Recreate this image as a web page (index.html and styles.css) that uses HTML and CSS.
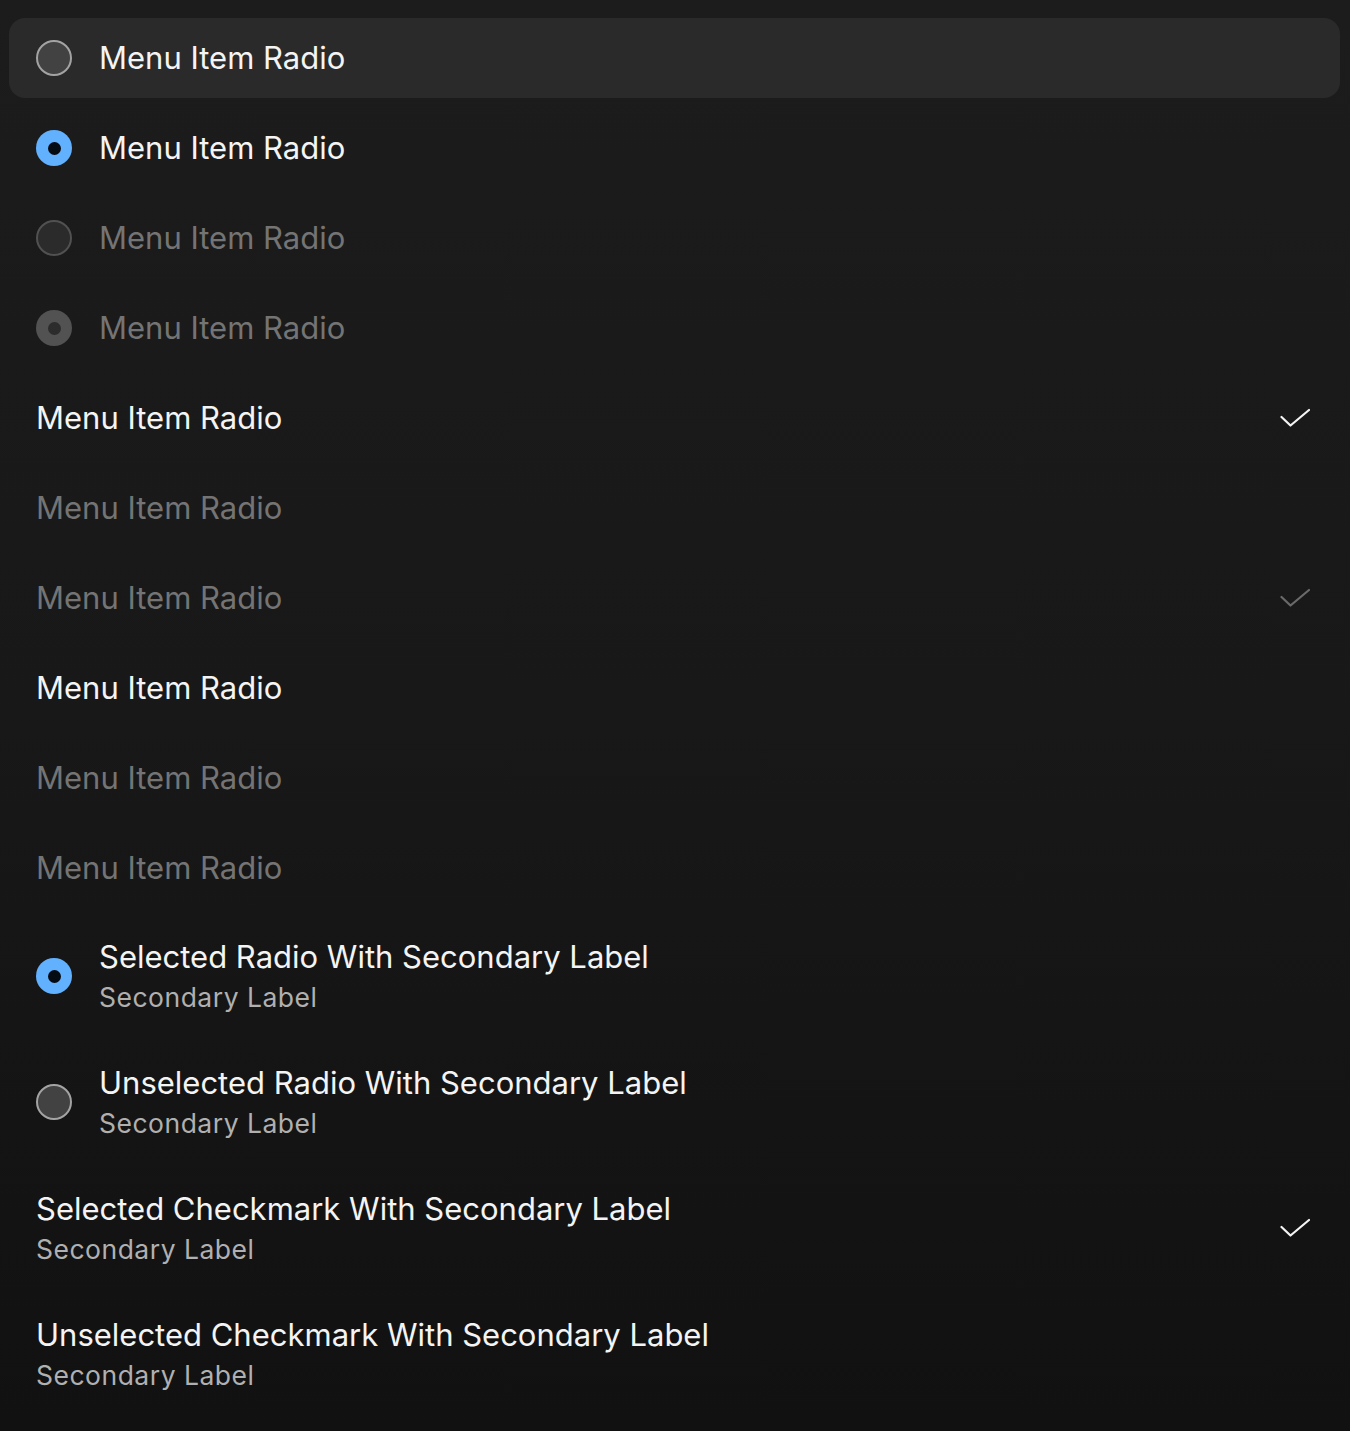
FILE: index.html
```html
<!DOCTYPE html>
<html lang="en">
<head>
<meta charset="utf-8">
<title>Menu Items</title>
<link rel="stylesheet" href="styles.css">
</head>
<body>
<ul class="menu">
  <li class="item hover">
    <span class="radio"></span>
    <span class="label">Menu Item Radio</span>
  </li>
  <li class="item">
    <span class="radio checked"></span>
    <span class="label">Menu Item Radio</span>
  </li>
  <li class="item disabled">
    <span class="radio"></span>
    <span class="label">Menu Item Radio</span>
  </li>
  <li class="item disabled">
    <span class="radio checked"></span>
    <span class="label">Menu Item Radio</span>
  </li>
  <li class="item">
    <span class="label">Menu Item Radio</span>
    <svg class="check" viewBox="0 0 30 20" width="30" height="20"><polyline points="1.5,9 10.5,17.5 29,2" /></svg>
  </li>
  <li class="item disabled">
    <span class="label">Menu Item Radio</span>
  </li>
  <li class="item disabled">
    <span class="label">Menu Item Radio</span>
    <svg class="check" viewBox="0 0 30 20" width="30" height="20"><polyline points="1.5,9 10.5,17.5 29,2" /></svg>
  </li>
  <li class="item">
    <span class="label">Menu Item Radio</span>
  </li>
  <li class="item disabled">
    <span class="label">Menu Item Radio</span>
  </li>
  <li class="item disabled">
    <span class="label">Menu Item Radio</span>
  </li>
  <li class="item tall">
    <span class="radio checked"></span>
    <span class="texts">
      <span class="label">Selected Radio With Secondary Label</span>
      <span class="secondary">Secondary Label</span>
    </span>
  </li>
  <li class="item tall">
    <span class="radio"></span>
    <span class="texts">
      <span class="label">Unselected Radio With Secondary Label</span>
      <span class="secondary">Secondary Label</span>
    </span>
  </li>
  <li class="item tall">
    <span class="texts">
      <span class="label">Selected Checkmark With Secondary Label</span>
      <span class="secondary">Secondary Label</span>
    </span>
    <svg class="check" viewBox="0 0 30 20" width="30" height="20"><polyline points="1.5,9 10.5,17.5 29,2" /></svg>
  </li>
  <li class="item tall">
    <span class="texts">
      <span class="label">Unselected Checkmark With Secondary Label</span>
      <span class="secondary">Secondary Label</span>
    </span>
  </li>
</ul>
</body>
</html>
```

FILE: styles.css
```css
html, body {
  margin: 0;
  padding: 0;
}
body {
  width: 1350px;
  min-height: 1431px;
  background: linear-gradient(to bottom, #1c1c1c 0%, #181818 50%, #111111 100%);
  font-family: "Inter", "Noto Sans", sans-serif;
  color: #f4f4f4;
}
.menu {
  list-style: none;
  margin: 0;
  padding: 18px 10px 0 9px;
  display: flex;
  flex-direction: column;
  gap: 10px;
}
.item {
  height: 80px;
  display: flex;
  align-items: center;
  gap: 27px;
  padding: 0 30px 0 27px;
  border-radius: 16px;
}
.item.tall {
  height: 116px;
}
.item.hover {
  background: #2a2a2a;
}
.radio {
  flex: none;
  box-sizing: border-box;
  width: 36px;
  height: 36px;
  border-radius: 50%;
  background: #424242;
  border: 2px solid #a3a3a3;
  display: flex;
  align-items: center;
  justify-content: center;
}
.radio.checked {
  background: #62b1ff;
  border: none;
}
.radio.checked::after {
  content: "";
  width: 13px;
  height: 13px;
  border-radius: 50%;
  background: #050b13;
}
.disabled .radio {
  background: #2b2b2b;
  border-color: #515151;
}
.disabled .radio.checked {
  background: #525252;
}
.disabled .radio.checked::after {
  background: #2c2c2c;
}
.label {
  font-size: 31px;
  line-height: 36px;
  white-space: nowrap;
}
.disabled .label {
  color: #747474;
}
.texts {
  display: flex;
  flex-direction: column;
  gap: 6px;
}
.secondary {
  font-size: 26.5px;
  line-height: 32px;
  color: #b0b0b0;
  letter-spacing: 0.5px;
}
.check {
  margin-left: auto;
  fill: none;
  stroke: #f4f4f4;
  stroke-width: 2.2;
  stroke-linecap: round;
  stroke-linejoin: round;
}
.disabled .check {
  stroke: #6a6a6a;
}
```
